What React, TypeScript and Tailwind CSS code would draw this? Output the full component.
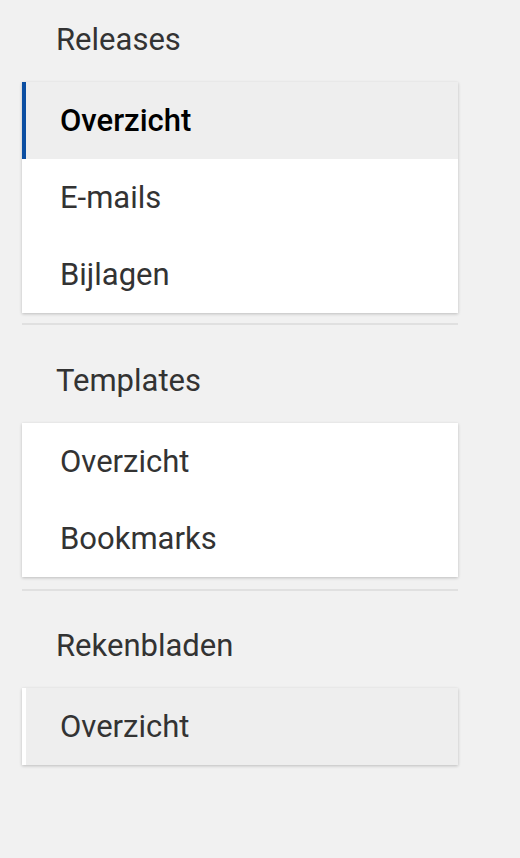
type Item = { label: string; active?: boolean; hover?: boolean };
type Section = { title: string; items: Item[]; headTop: string; divider: string };

const sections: Section[] = [
  {
    title: 'Releases',
    headTop: 'pt-[22px]',
    divider: 'mt-[10px]',
    items: [{ label: 'Overzicht', active: true }, { label: 'E-mails' }, { label: 'Bijlagen' }],
  },
  {
    title: 'Templates',
    headTop: 'pt-[38px]',
    divider: 'mt-[12px]',
    items: [{ label: 'Overzicht' }, { label: 'Bookmarks' }],
  },
  {
    title: 'Rekenbladen',
    headTop: 'pt-[37px]',
    divider: '',
    items: [{ label: 'Overzicht', hover: true }],
  },
];

function Row({ item }: { item: Item }) {
  const tone = item.active
    ? 'border-[#0b4ea2] bg-[#eeeeee] font-medium text-black'
    : item.hover
      ? 'border-white bg-[#eeeeee] text-[#333333]'
      : 'border-white bg-white text-[#333333]';
  return (
    <div className={`flex h-[77px] items-center border-l-4 pl-[34px] text-[31px] leading-[36px] ${tone}`}>
      {item.label}
    </div>
  );
}

export default function App() {
  return (
    <div
      className="min-h-[858px] w-full bg-[#f1f1f1] pl-[22px]"
      style={{ fontFamily: 'Roboto, "Noto Sans", sans-serif' }}
    >
      <div className="w-[436px]">
        {sections.map((s) => (
          <div key={s.title}>
            <h2 className={`${s.headTop} pl-[34px] text-[31px] font-normal leading-[36px] text-[#333333]`}>
              {s.title}
            </h2>
            <div className="mt-[24px] bg-white shadow-[0_1px_3px_rgba(0,0,0,0.22)]">
              {s.items.map((it) => (
                <Row key={it.label} item={it} />
              ))}
            </div>
            {s.divider && <div className={`${s.divider} h-[2px] bg-[#e0e0e0]`} />}
          </div>
        ))}
      </div>
    </div>
  );
}
